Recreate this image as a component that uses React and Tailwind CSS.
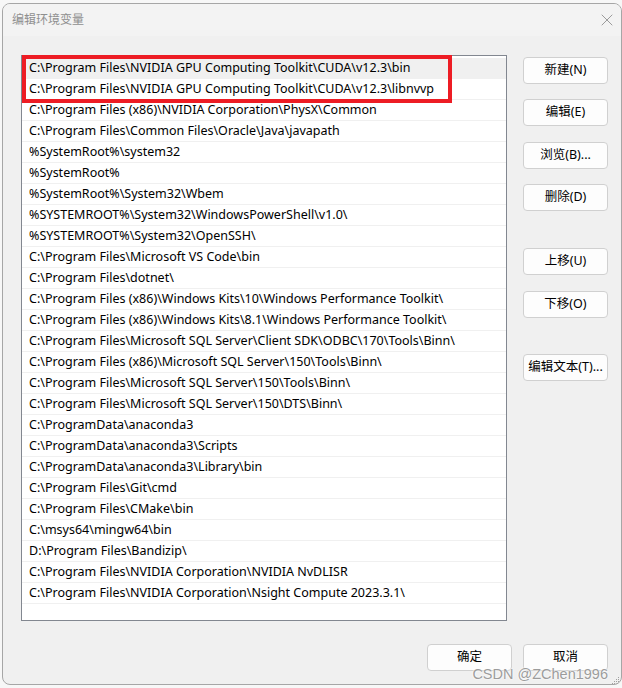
import { X } from "lucide-react";

const paths = [
  "C:\\Program Files\\NVIDIA GPU Computing Toolkit\\CUDA\\v12.3\\bin",
  "C:\\Program Files\\NVIDIA GPU Computing Toolkit\\CUDA\\v12.3\\libnvvp",
  "C:\\Program Files (x86)\\NVIDIA Corporation\\PhysX\\Common",
  "C:\\Program Files\\Common Files\\Oracle\\Java\\javapath",
  "%SystemRoot%\\system32",
  "%SystemRoot%",
  "%SystemRoot%\\System32\\Wbem",
  "%SYSTEMROOT%\\System32\\WindowsPowerShell\\v1.0\\",
  "%SYSTEMROOT%\\System32\\OpenSSH\\",
  "C:\\Program Files\\Microsoft VS Code\\bin",
  "C:\\Program Files\\dotnet\\",
  "C:\\Program Files (x86)\\Windows Kits\\10\\Windows Performance Toolkit\\",
  "C:\\Program Files (x86)\\Windows Kits\\8.1\\Windows Performance Toolkit\\",
  "C:\\Program Files\\Microsoft SQL Server\\Client SDK\\ODBC\\170\\Tools\\Binn\\",
  "C:\\Program Files (x86)\\Microsoft SQL Server\\150\\Tools\\Binn\\",
  "C:\\Program Files\\Microsoft SQL Server\\150\\Tools\\Binn\\",
  "C:\\Program Files\\Microsoft SQL Server\\150\\DTS\\Binn\\",
  "C:\\ProgramData\\anaconda3",
  "C:\\ProgramData\\anaconda3\\Scripts",
  "C:\\ProgramData\\anaconda3\\Library\\bin",
  "C:\\Program Files\\Git\\cmd",
  "C:\\Program Files\\CMake\\bin",
  "C:\\msys64\\mingw64\\bin",
  "D:\\Program Files\\Bandizip\\",
  "C:\\Program Files\\NVIDIA Corporation\\NVIDIA NvDLISR",
  "C:\\Program Files\\NVIDIA Corporation\\Nsight Compute 2023.3.1\\",
];

function WinButton({ children, className = "" }) {
  return (
    <button
      className={`h-[27px] w-[85px] rounded-[4px] border border-[#d0d0d0] bg-[#fdfdfd] text-[12.5px] text-black flex items-center justify-center ${className}`}
    >
      {children}
    </button>
  );
}

export default function App() {
  return (
    <div
      className="w-[622px] h-[688px] bg-[#f7f7f7] pt-[3px] pl-[2px] overflow-hidden"
      style={{ fontFamily: '"Noto Sans", "Noto Sans CJK SC", sans-serif' }}
    >
      <div className="relative w-[620px] h-[682px] rounded-[8px] border border-[#a6a6a6] bg-[#f0f0f0] overflow-hidden flex flex-col">
        {/* Title bar */}
        <div className="h-[32px] bg-[#f3f3f3] flex items-center justify-between pl-[9px] pr-[4px]">
          <span className="text-[12px] text-[#8f8f8f]">编辑环境变量</span>
          <X size={20} strokeWidth={0.8} className="text-[#6e6e6e]" />
        </div>

        {/* Body */}
        <div className="flex pl-[18px] pt-[19px]">
          {/* Path list */}
          <div className="relative w-[486px] h-[566px] border border-[#828790] bg-white pt-[2px]">
            {paths.map((p, i) => (
              <div
                key={i}
                className={`h-[21px] border-b border-[#f0f0f0] pl-[7px] flex items-center text-[12.5px] text-black whitespace-nowrap ${
                  i === 0 ? "bg-[#f0f0f0]" : ""
                }`}
              >
                {p}
              </div>
            ))}

            {/* Red annotation box */}
            <div className="absolute left-[0px] top-[-1px] w-[430px] h-[48px] border-[4px] border-[#ed1c24]" />
          </div>

          {/* Side buttons */}
          <div className="ml-[16px] flex flex-col">
            <WinButton className="mt-[2px]">新建(N)</WinButton>
            <WinButton className="mt-[15px]">编辑(E)</WinButton>
            <WinButton className="mt-[16px]">浏览(B)...</WinButton>
            <WinButton className="mt-[15px]">删除(D)</WinButton>
            <WinButton className="mt-[37px]">上移(U)</WinButton>
            <WinButton className="mt-[16px]">下移(O)</WinButton>
            <WinButton className="mt-[36px]">编辑文本(T)...</WinButton>
          </div>
        </div>

        {/* Footer buttons */}
        <div className="flex justify-end gap-[11px] pr-[13px] mt-[23px]">
          <WinButton>确定</WinButton>
          <WinButton>取消</WinButton>
        </div>

        {/* Watermark */}
        <span
          className="absolute right-[13px] bottom-[3px] text-[14.5px] text-[#9c9c9c] leading-none"
          style={{
            fontFamily: '"Liberation Sans", sans-serif',
            textShadow: "0 0 2px #fff, 0 0 2px #fff",
          }}
        >
          CSDN @ZChen1996
        </span>

        {/* Resize grip */}
        <svg
          className="absolute right-[1px] bottom-[-1px]"
          width="9"
          height="9"
          viewBox="0 0 9 9"
        >
          <g fill="#a0a0a0">
            <rect x="7" y="1" width="1" height="1" />
            <rect x="5" y="3" width="1" height="1" />
            <rect x="7" y="3" width="1" height="1" />
            <rect x="3" y="5" width="1" height="1" />
            <rect x="5" y="5" width="1" height="1" />
            <rect x="7" y="5" width="1" height="1" />
            <rect x="1" y="7" width="1" height="1" />
            <rect x="3" y="7" width="1" height="1" />
            <rect x="5" y="7" width="1" height="1" />
            <rect x="7" y="7" width="1" height="1" />
          </g>
        </svg>
      </div>
    </div>
  );
}
